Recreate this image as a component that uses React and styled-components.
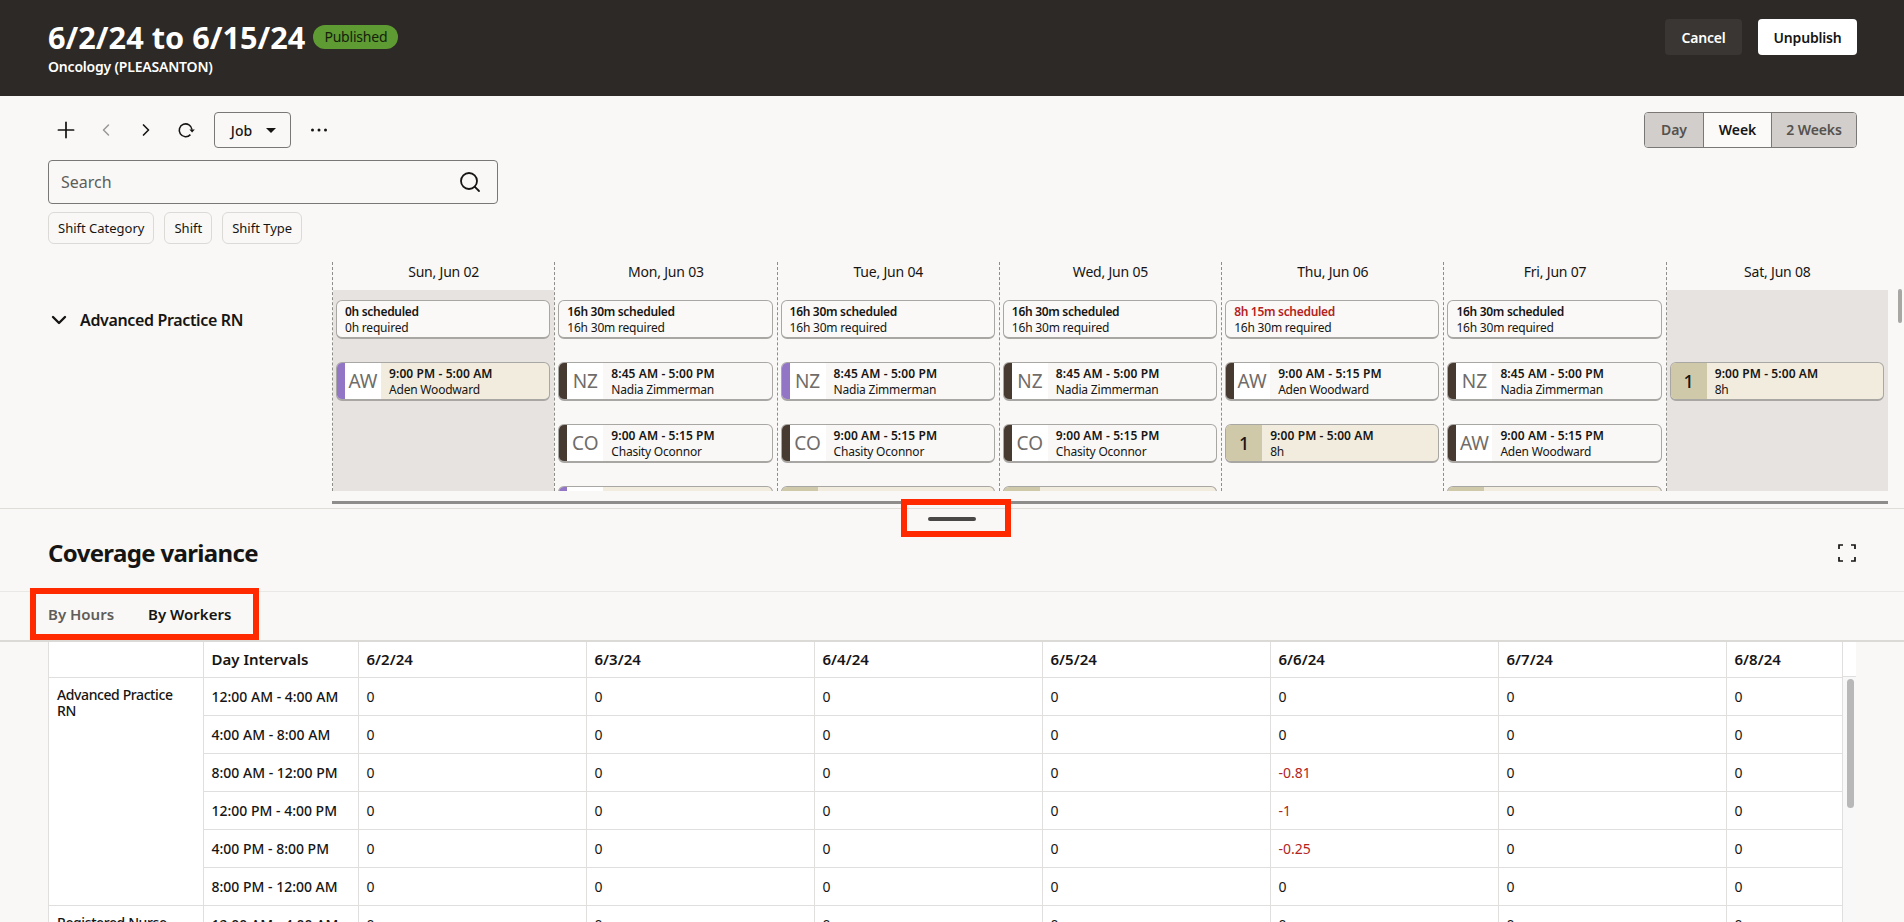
import React from "react";
import styled, { createGlobalStyle } from "styled-components";
import { Plus, ChevronLeft, ChevronRight, ChevronDown, Search } from "lucide-react";

const GlobalStyle = createGlobalStyle`
  html, body {
    margin: 0;
    padding: 0;
    background: #f9f8f6;
  }
  * {
    box-sizing: border-box;
  }
  body {
    font-family: "Noto Sans", "Liberation Sans", sans-serif;
    color: #161513;
  }
`;

const Page = styled.div`
  height: 922px;
  overflow: hidden;
  display: flex;
  flex-direction: column;
  background: #f9f8f6;
`;

const Header = styled.header`
  height: 96px;
  flex: none;
  background: #2d2926;
  padding: 19px 47px 0 48px;
  display: flex;
  justify-content: space-between;
  align-items: flex-start;
`;

const TitleRow = styled.div`
  display: flex;
  align-items: center;
  gap: 8px;
  height: 36px;
`;

const Title = styled.h1`
  margin: 0;
  font-size: 30.7px;
  line-height: 36px;
  font-weight: 700;
  color: #fff;
`;

const Badge = styled.span`
  width: 85px;
  height: 24px;
  margin-top: -1px;
  border-radius: 12px;
  background: #5f9b33;
  color: #14210b;
  font-size: 14px;
  letter-spacing: -0.2px;
  display: flex;
  align-items: center;
  justify-content: center;
`;

const Subtitle = styled.div`
  color: #fff;
  font-size: 14px;
  font-weight: 600;
  letter-spacing: -0.2px;
  line-height: 18px;
  margin-top: 3px;
`;

const HeaderActions = styled.div`
  display: flex;
  gap: 16px;
`;

const HeaderButton = styled.button`
  height: 36px;
  width: ${(p) => p.$width}px;
  border: none;
  border-radius: 4px;
  background: ${(p) => (p.$primary ? "#fff" : "#3a3633")};
  color: ${(p) => (p.$primary ? "#161513" : "#fff")};
  font: 600 14px "Noto Sans", sans-serif;
  letter-spacing: -0.2px;
`;

const Toolbar = styled.div`
  margin-top: 16px;
  height: 36px;
  flex: none;
  padding: 0 47px 0 48px;
  display: flex;
  align-items: center;
  justify-content: space-between;
`;

const ToolGroup = styled.div`
  display: flex;
  align-items: center;
`;

const IconButton = styled.span`
  width: 40px;
  height: 36px;
  display: flex;
  align-items: center;
  justify-content: center;
  color: ${(p) => (p.$disabled ? "#9a9895" : "#161513")};
`;

const AddButton = styled(IconButton)`
  margin-left: -2px;
`;

const SelectButton = styled.button`
  width: 77px;
  height: 36px;
  margin: 0 8px;
  padding: 0 0 0 2px;
  border: 1px solid #7a7876;
  border-radius: 4px;
  background: transparent;
  font: 500 14px "Noto Sans", sans-serif;
  color: #161513;
  display: flex;
  align-items: center;
  justify-content: center;
  gap: 14px;
`;

const Caret = styled.span`
  width: 0;
  height: 0;
  border-left: 5px solid transparent;
  border-right: 5px solid transparent;
  border-top: 5px solid #161513;
`;

const Segments = styled.div`
  display: flex;
  height: 36px;
  border: 1px solid #7a7876;
  border-radius: 4px;
  overflow: hidden;
`;

const Segment = styled.span`
  width: ${(p) => p.$width}px;
  padding-bottom: 2px;
  display: flex;
  align-items: center;
  justify-content: center;
  font-size: 14px;
  font-weight: 600;
  letter-spacing: -0.1px;
  background: ${(p) => (p.$active ? "#fbfaf9" : "#d1cecb")};
  color: ${(p) => (p.$active ? "#161513" : "#55524f")};
  & + & {
    border-left: 1px solid #7a7876;
  }
`;

const SearchBox = styled.div`
  margin: 12px 0 0 48px;
  width: 450px;
  height: 44px;
  flex: none;
  border: 1px solid #7a7876;
  border-radius: 4px;
  padding: 0 15px 0 12px;
  display: flex;
  align-items: center;
  justify-content: space-between;
  font-size: 16px;
  color: #5f5c59;
`;

const Chips = styled.div`
  margin: 8px 0 0 48px;
  flex: none;
  display: flex;
  gap: 10px;
`;

const Chip = styled.span`
  height: 32px;
  padding: 0 9px;
  border: 1px solid #dcdad7;
  border-radius: 6px;
  font-size: 13px;
  display: flex;
  align-items: center;
`;

const Schedule = styled.section`
  margin-top: 18px;
  height: 229px;
  flex: none;
  display: flex;
`;

const RowLabel = styled.div`
  width: 332px;
  flex: none;
  padding: 46px 0 0 47px;
  display: flex;
  align-items: flex-start;
  gap: 9px;
  font-size: 16px;
  font-weight: 600;
  letter-spacing: -0.35px;
  line-height: 24px;
`;

const DayColumn = styled.div`
  flex: 1;
  min-width: 0;
  border-left: 1px dashed #8f8d8a;
  display: flex;
  flex-direction: column;
`;

const DayName = styled.div`
  height: 28px;
  flex: none;
  padding-bottom: 8px;
  font-size: 14px;
  letter-spacing: -0.2px;
  line-height: 20px;
  text-align: center;
`;

const DayBody = styled.div`
  flex: 1;
  overflow: hidden;
  padding: 10.2px 4px 0 3px;
  background: ${(p) => (p.$weekend ? "#e6e3e1" : "transparent")};
`;

const Slot = styled.div`
  height: 38.7px;
  margin-bottom: 23.3px;
`;

const Card = styled.div`
  height: 100%;
  border: 1px solid #a9a7a4;
  border-bottom-width: 2px;
  border-radius: 6px;
  overflow: hidden;
  display: flex;
  background: ${(p) => (p.$open ? "#f1ecdd" : "#f9f8f6")};
`;

const SummaryCard = styled(Card)`
  display: block;
  padding: 3px 8px 0;
  background: #faf9f7;
`;

const Stripe = styled.span`
  width: 8px;
  flex: none;
  background: ${(p) => p.$color};
`;

const Avatar = styled.span`
  width: 36px;
  flex: none;
  background: #fff;
  color: #6f6c69;
  font-size: 19px;
  display: flex;
  align-items: center;
  justify-content: center;
`;

const CountBlock = styled.span`
  width: 36px;
  flex: none;
  background: #d0c9a9;
  font-size: 18px;
  font-weight: 500;
  display: flex;
  align-items: center;
  justify-content: center;
`;

const CardText = styled.div`
  padding: 3px 0 0 8px;
  min-width: 0;
  white-space: nowrap;
`;

const StrongLine = styled.div`
  font-size: 12px;
  line-height: 16px;
  font-weight: 600;
  letter-spacing: -0.3px;
  white-space: nowrap;
  color: ${(p) => (p.$alert ? "#b3231d" : "inherit")};
`;

const TimeLine = styled(StrongLine)`
  letter-spacing: 0.1px;
`;

const PlainLine = styled.div`
  font-size: 12px;
  letter-spacing: -0.2px;
  line-height: 16px;
  white-space: nowrap;
`;

const ScrollGutter = styled.div`
  width: 16px;
  flex: none;
  padding: 27px 0 0 10px;
`;

const ScrollThumb = styled.div`
  width: 4px;
  height: 34px;
  border-radius: 2px;
  background: #a9a7a4;
`;

const ScheduleEdge = styled.div`
  margin: 10px 16px 0 332px;
  height: 3px;
  flex: none;
  background: #8f8d8b;
`;

const Splitter = styled.div`
  position: relative;
  margin-top: 4px;
  height: 13px;
  flex: none;
  border-top: 1px solid #e0ddd9;
  display: flex;
  justify-content: center;
  align-items: flex-end;
`;

const Handle = styled.span`
  width: 48px;
  height: 4px;
  border-radius: 2px;
  background: #4a4846;
`;

const Callout = styled.span`
  position: absolute;
  border: 6px solid #ff2a00;
  pointer-events: none;
`;

const HandleCallout = styled(Callout)`
  left: 901px;
  top: -10px;
  width: 110px;
  height: 38px;
`;

const TabsCallout = styled(Callout)`
  left: 30px;
  top: -4px;
  width: 229px;
  height: 52px;
`;

const CoverageHead = styled.div`
  height: 71px;
  flex: none;
  padding: 0 48px 6px;
  display: flex;
  align-items: center;
  justify-content: space-between;
  border-bottom: 1px solid #eae8e5;
`;

const CoverageTitle = styled.h2`
  margin: 0;
  font-size: 24px;
  font-weight: 700;
  letter-spacing: -0.65px;
  line-height: 32px;
`;

const Tabs = styled.div`
  position: relative;
  height: 50px;
  flex: none;
  padding: 0 0 5px 48px;
  display: flex;
  gap: 34px;
  align-items: center;
  border-bottom: 2px solid #dcdad7;
`;

const Tab = styled.span`
  font-size: 15px;
  font-weight: 600;
  color: ${(p) => (p.$active ? "#161513" : "#5f5c59")};
`;

const TableWrap = styled.div`
  flex: 1;
  min-height: 0;
  margin: 0 48px;
  display: flex;
  overflow: hidden;
`;

const Table = styled.table`
  width: 1793.5px;
  flex: none;
  align-self: flex-start;
  table-layout: fixed;
  border-collapse: collapse;
  background: #fff;
  font-size: 14px;
`;

const HeadCell = styled.th`
  height: 35px;
  padding: 0 8px;
  border: 1px solid #e0dfdd;
  border-top: none;
  text-align: left;
  font-size: 15px;
  font-weight: 600;
`;

const GroupCell = styled.td`
  padding: 9px 16px 0 8px;
  border: 1px solid #e0dfdd;
  vertical-align: top;
  font-size: 14px;
  font-weight: 500;
  letter-spacing: -0.4px;
  line-height: 16px;
`;

const IntervalCell = styled.td`
  height: 38px;
  padding: 0 8px;
  border: 1px solid #e0dfdd;
  font-size: 14px;
  font-weight: 500;
  white-space: nowrap;
`;

const ValueCell = styled.td`
  height: 38px;
  padding: 0 8px;
  border: 1px solid #e0dfdd;
  color: ${(p) => (p.$negative ? "#b3231d" : "#161513")};
`;

const TableGutter = styled.div`
  width: 15px;
  flex: none;
  background: #fff;
  border-right: 1px solid #e0dfdd;
  display: flex;
  flex-direction: column;
`;

const GutterHead = styled.div`
  height: 35px;
  flex: none;
  border-bottom: 1px solid #e0dfdd;
`;

const GutterTrack = styled.div`
  flex: 1;
  background: #f8f8f8;
  padding: 2px 0 0 4px;
`;

const GutterThumb = styled.div`
  width: 7px;
  height: 129px;
  border-radius: 4px;
  background: #b8b8b8;
`;

const PURPLE = "#9275c4";
const BROWN = "#473a30";

const worker = (stripe, initials, time, name, open) => ({ stripe, initials, time, name, open });
const openShift = (time, hours) => ({ count: 1, time, hours });

const NIGHT = "9:00 PM - 5:00 AM";
const EARLY = "8:45 AM - 5:00 PM";
const DAY = "9:00 AM - 5:15 PM";

const days = [
  {
    name: "Sun, Jun 02",
    weekend: true,
    scheduled: "0h scheduled",
    required: "0h required",
    shifts: [worker(PURPLE, "AW", NIGHT, "Aden Woodward", true)],
  },
  {
    name: "Mon, Jun 03",
    scheduled: "16h 30m scheduled",
    required: "16h 30m required",
    shifts: [
      worker(BROWN, "NZ", EARLY, "Nadia Zimmerman"),
      worker(BROWN, "CO", DAY, "Chasity Oconnor"),
      worker(PURPLE, "AW", NIGHT, "Aden Woodward", true),
    ],
  },
  {
    name: "Tue, Jun 04",
    scheduled: "16h 30m scheduled",
    required: "16h 30m required",
    shifts: [
      worker(PURPLE, "NZ", EARLY, "Nadia Zimmerman"),
      worker(BROWN, "CO", DAY, "Chasity Oconnor"),
      openShift(NIGHT, "8h"),
    ],
  },
  {
    name: "Wed, Jun 05",
    scheduled: "16h 30m scheduled",
    required: "16h 30m required",
    shifts: [
      worker(BROWN, "NZ", EARLY, "Nadia Zimmerman"),
      worker(BROWN, "CO", DAY, "Chasity Oconnor"),
      openShift(NIGHT, "8h"),
    ],
  },
  {
    name: "Thu, Jun 06",
    scheduled: "8h 15m scheduled",
    required: "16h 30m required",
    alert: true,
    shifts: [worker(BROWN, "AW", DAY, "Aden Woodward"), openShift(NIGHT, "8h")],
  },
  {
    name: "Fri, Jun 07",
    scheduled: "16h 30m scheduled",
    required: "16h 30m required",
    shifts: [
      worker(BROWN, "NZ", EARLY, "Nadia Zimmerman"),
      worker(BROWN, "AW", DAY, "Aden Woodward"),
      openShift(NIGHT, "8h"),
    ],
  },
  {
    name: "Sat, Jun 08",
    weekend: true,
    shifts: [openShift(NIGHT, "8h")],
  },
];

const dates = ["6/2/24", "6/3/24", "6/4/24", "6/5/24", "6/6/24", "6/7/24", "6/8/24"];
const colWidths = [154.5, 155, 228, 228, 228, 228, 228, 228, 116];

const groups = [
  {
    name: "Advanced Practice RN",
    rows: [
      ["12:00 AM - 4:00 AM", 0, 0, 0, 0, 0, 0, 0],
      ["4:00 AM - 8:00 AM", 0, 0, 0, 0, 0, 0, 0],
      ["8:00 AM - 12:00 PM", 0, 0, 0, 0, -0.81, 0, 0],
      ["12:00 PM - 4:00 PM", 0, 0, 0, 0, -1, 0, 0],
      ["4:00 PM - 8:00 PM", 0, 0, 0, 0, -0.25, 0, 0],
      ["8:00 PM - 12:00 AM", 0, 0, 0, 0, 0, 0, 0],
    ],
  },
  {
    name: "Registered Nurse",
    rows: [["12:00 AM - 4:00 AM", 0, 0, 0, 0, 0, 0, 0]],
  },
];

const RefreshIcon = () => (
  <svg width="20" height="20" viewBox="0 0 20 20" fill="none">
    <path d="M14.4 14.6A6.4 6.4 0 1 1 16 9.6" stroke="#161513" strokeWidth="1.6" />
    <path d="M13.4 9.4h5.4l-2.7 3.2z" fill="#161513" />
  </svg>
);

const DotsIcon = () => (
  <svg width="20" height="20" viewBox="0 0 20 20" fill="#161513">
    <circle cx="3.5" cy="10" r="1.5" />
    <circle cx="10" cy="10" r="1.5" />
    <circle cx="16.5" cy="10" r="1.5" />
  </svg>
);

const ExpandIcon = () => (
  <svg width="18" height="18" viewBox="0 0 18 18" fill="none" stroke="#161513" strokeWidth="1.7">
    <path d="M1 5V1h4M13 1h4v4M17 13v4h-4M5 17H1v-4" />
  </svg>
);

const ShiftCard = ({ shift }) =>
  shift.count ? (
    <Card $open>
      <CountBlock>{shift.count}</CountBlock>
      <CardText>
        <TimeLine>{shift.time}</TimeLine>
        <PlainLine>{shift.hours}</PlainLine>
      </CardText>
    </Card>
  ) : (
    <Card $open={shift.open}>
      <Stripe $color={shift.stripe} />
      <Avatar>{shift.initials}</Avatar>
      <CardText>
        <TimeLine>{shift.time}</TimeLine>
        <PlainLine>{shift.name}</PlainLine>
      </CardText>
    </Card>
  );

const App = () => {
  return (
    <Page>
      <GlobalStyle />
      <Header>
        <div>
          <TitleRow>
            <Title>6/2/24 to 6/15/24</Title>
            <Badge>Published</Badge>
          </TitleRow>
          <Subtitle>Oncology (PLEASANTON)</Subtitle>
        </div>
        <HeaderActions>
          <HeaderButton $width={77}>Cancel</HeaderButton>
          <HeaderButton $width={99} $primary>
            Unpublish
          </HeaderButton>
        </HeaderActions>
      </Header>

      <Toolbar>
        <ToolGroup>
          <AddButton>
            <Plus size={26} strokeWidth={1.6} />
          </AddButton>
          <IconButton $disabled>
            <ChevronLeft size={20} strokeWidth={1.8} />
          </IconButton>
          <IconButton>
            <ChevronRight size={20} strokeWidth={2} />
          </IconButton>
          <IconButton>
            <RefreshIcon />
          </IconButton>
          <SelectButton>
            Job
            <Caret />
          </SelectButton>
          <IconButton>
            <DotsIcon />
          </IconButton>
        </ToolGroup>
        <Segments>
          <Segment $width={58}>Day</Segment>
          <Segment $width={68} $active>
            Week
          </Segment>
          <Segment $width={85}>2 Weeks</Segment>
        </Segments>
      </Toolbar>

      <SearchBox>
        Search
        <Search size={24} color="#161513" strokeWidth={1.8} />
      </SearchBox>

      <Chips>
        <Chip>Shift Category</Chip>
        <Chip>Shift</Chip>
        <Chip>Shift Type</Chip>
      </Chips>

      <Schedule>
        <RowLabel>
          <ChevronDown size={24} strokeWidth={2.4} />
          Advanced Practice RN
        </RowLabel>
        {days.map((day) => (
          <DayColumn key={day.name}>
            <DayName>{day.name}</DayName>
            <DayBody $weekend={day.weekend}>
              <Slot>
                {day.scheduled && (
                  <SummaryCard>
                    <StrongLine $alert={day.alert}>{day.scheduled}</StrongLine>
                    <PlainLine>{day.required}</PlainLine>
                  </SummaryCard>
                )}
              </Slot>
              {day.shifts.map((shift, i) => (
                <Slot key={i}>
                  <ShiftCard shift={shift} />
                </Slot>
              ))}
            </DayBody>
          </DayColumn>
        ))}
        <ScrollGutter>
          <ScrollThumb />
        </ScrollGutter>
      </Schedule>
      <ScheduleEdge />

      <Splitter>
        <Handle />
        <HandleCallout />
      </Splitter>

      <CoverageHead>
        <CoverageTitle>Coverage variance</CoverageTitle>
        <ExpandIcon />
      </CoverageHead>

      <Tabs>
        <Tab>By Hours</Tab>
        <Tab $active>By Workers</Tab>
        <TabsCallout />
      </Tabs>

      <TableWrap>
        <Table>
          <colgroup>
            {colWidths.map((w, i) => (
              <col key={i} width={w} />
            ))}
          </colgroup>
          <thead>
            <tr>
              <HeadCell />
              <HeadCell>Day Intervals</HeadCell>
              {dates.map((d) => (
                <HeadCell key={d}>{d}</HeadCell>
              ))}
            </tr>
          </thead>
          <tbody>
            {groups.map((group) =>
              group.rows.map(([interval, ...values], r) => (
                <tr key={group.name + interval}>
                  {r === 0 && <GroupCell rowSpan={group.rows.length}>{group.name}</GroupCell>}
                  <IntervalCell>{interval}</IntervalCell>
                  {values.map((v, i) => (
                    <ValueCell key={i} $negative={v < 0}>
                      {v}
                    </ValueCell>
                  ))}
                </tr>
              ))
            )}
          </tbody>
        </Table>
        <TableGutter>
          <GutterHead />
          <GutterTrack>
            <GutterThumb />
          </GutterTrack>
        </TableGutter>
      </TableWrap>
    </Page>
  );
};

export default App;
